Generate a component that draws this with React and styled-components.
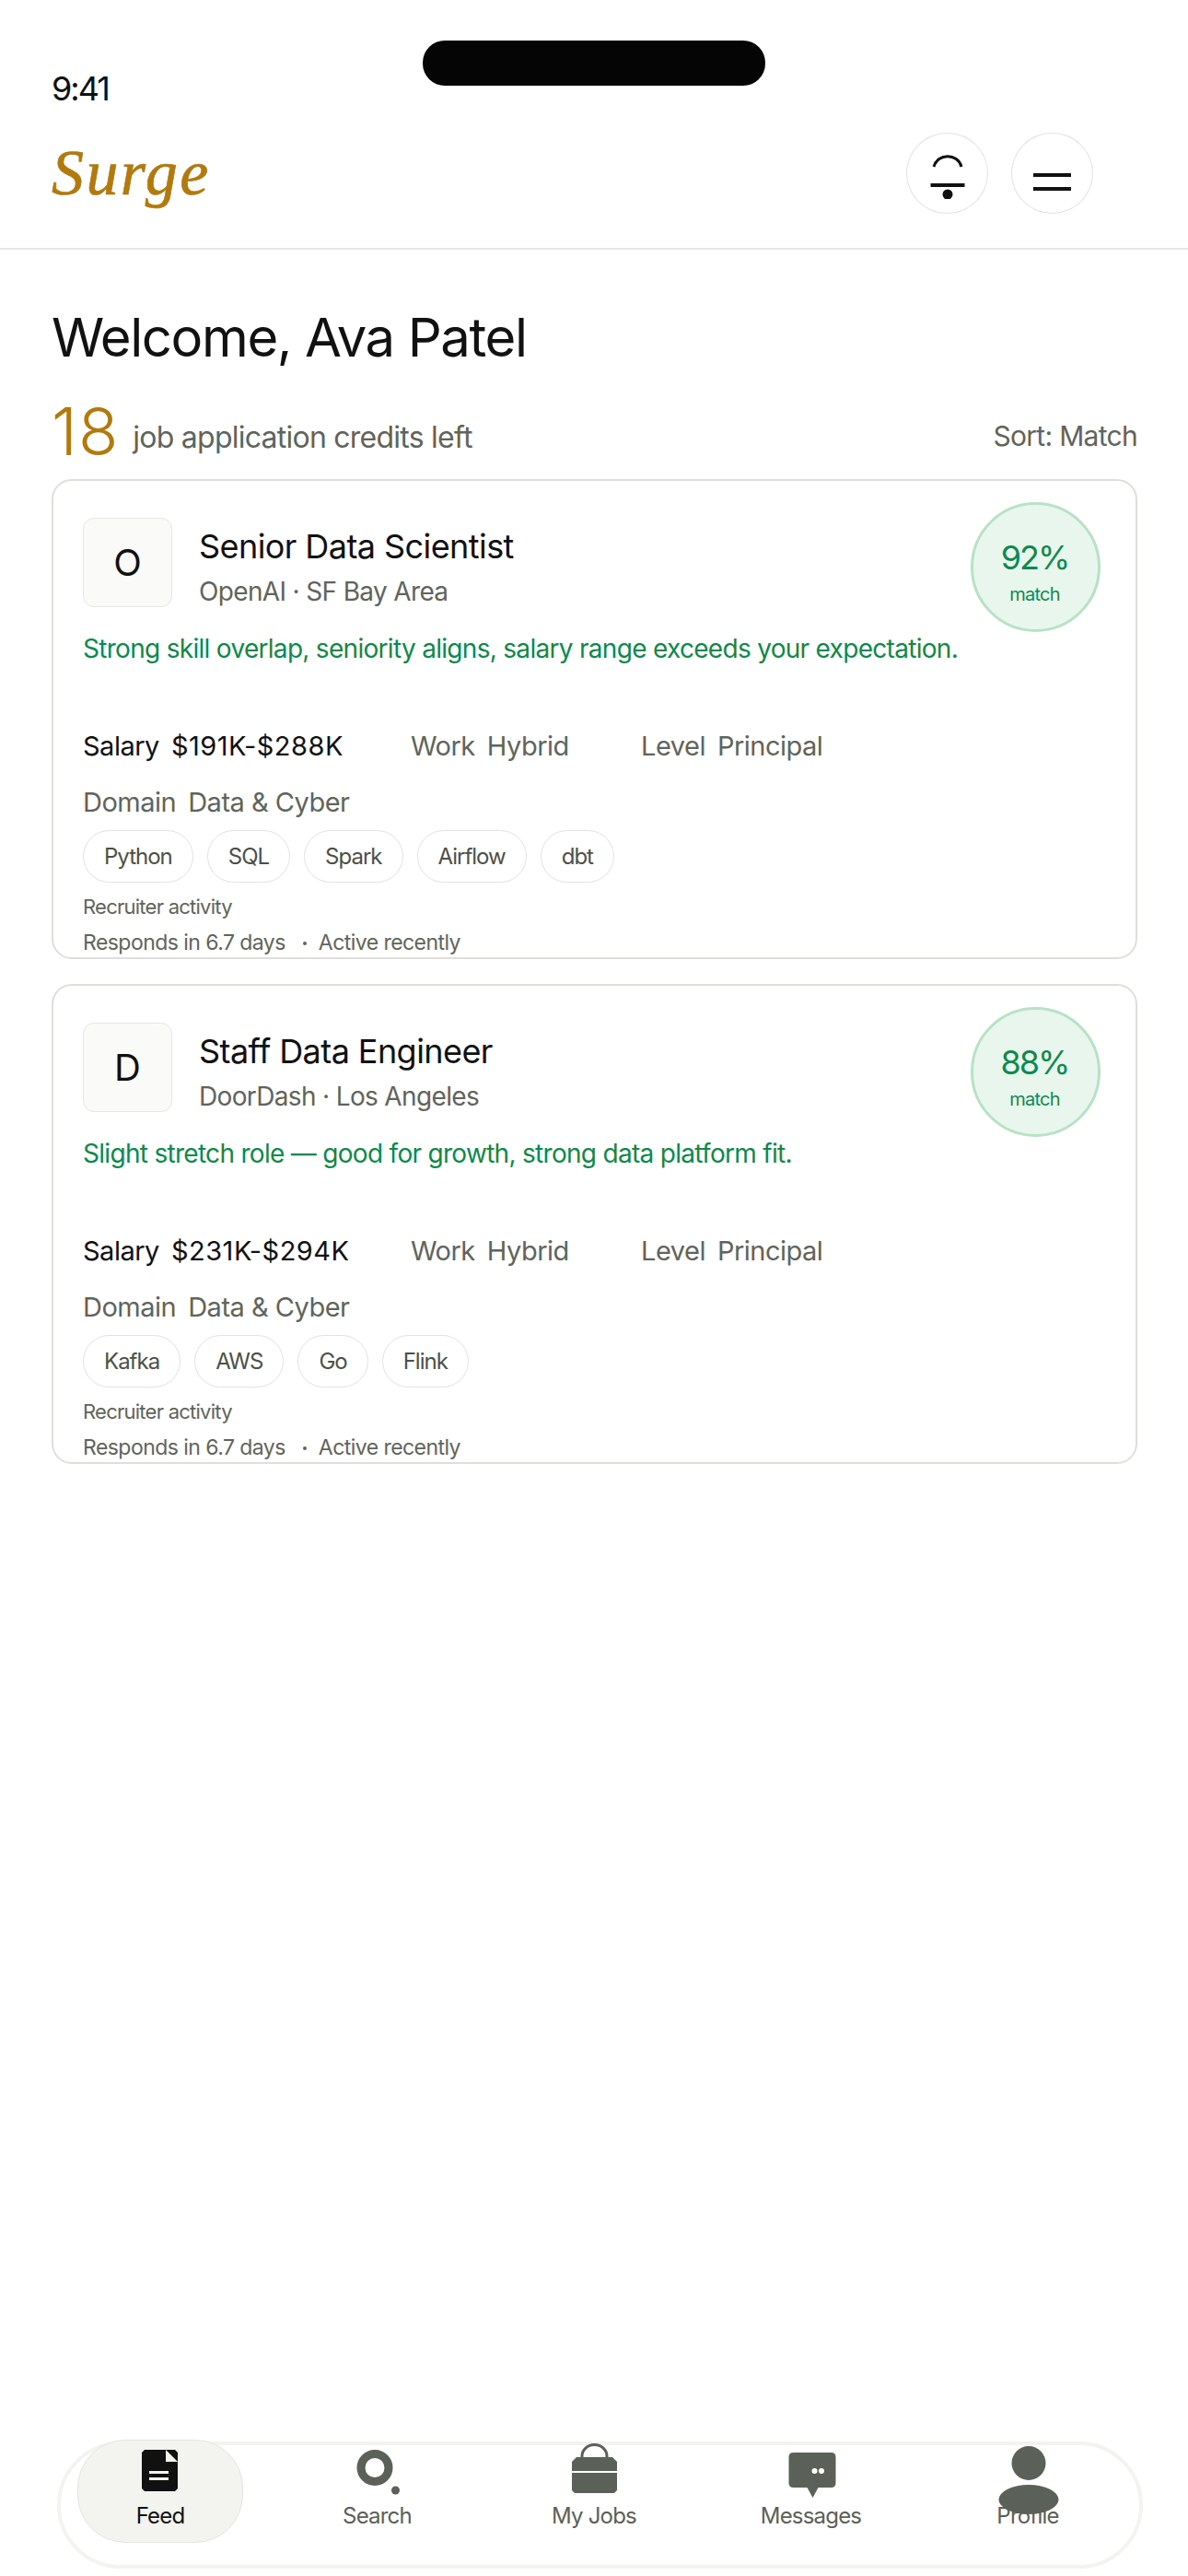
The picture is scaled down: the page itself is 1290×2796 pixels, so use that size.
import styled, { createGlobalStyle } from "styled-components";

const GlobalStyle = createGlobalStyle`
  * { box-sizing: border-box; }
  html, body { margin: 0; padding: 0; background: #fff; }
  body { font-family: Inter, "Liberation Sans", sans-serif; color: #111; }
`;

const Page = styled.div`
  position: relative;
  width: 1290px;
  height: 2796px;
  display: flex;
  flex-direction: column;
  overflow: hidden;
  background: #fff;
`;

const Island = styled.div`
  position: absolute;
  top: 44px;
  left: 459px;
  width: 372px;
  height: 49px;
  border-radius: 24px;
  background: #050505;
`;

const StatusBar = styled.div`
  height: 144px;
  padding: 76px 0 0 56px;
`;

const Time = styled.div`
  font-size: 36px;
  line-height: 40px;
  letter-spacing: -2px;
`;

const Header = styled.header`
  display: flex;
  justify-content: space-between;
  align-items: center;
  padding: 0 103px 37px 56px;
  border-bottom: 2px solid #e6e6e2;
`;

const Logo = styled.div`
  font-family: "Liberation Serif", serif;
  font-style: italic;
  font-size: 70px;
  line-height: 88px;
  letter-spacing: 2.4px;
  -webkit-text-stroke: 0.7px #b27a0d;
  color: #b27a0d;
`;

const Actions = styled.div`
  display: flex;
  gap: 25px;
`;

const RoundButton = styled.button`
  width: 89px;
  height: 88px;
  padding: 0;
  display: flex;
  align-items: center;
  justify-content: center;
  border: 1px solid #e2e2de;
  border-radius: 50%;
  background: #fff;
`;

const Main = styled.main`
  padding: 59px 55px 0 56px;
`;

const Welcome = styled.h1`
  margin: 0 0 32px;
  font-size: 58px;
  line-height: 72px;
  font-weight: 400;
  letter-spacing: -1.4px;
`;

const CreditsRow = styled.div`
  display: flex;
  align-items: center;
  justify-content: space-between;
  margin-bottom: 18px;
`;

const Credits = styled.div`
  display: flex;
  align-items: center;
  gap: 15px;
`;

const CreditCount = styled.span`
  font-size: 71px;
  line-height: 68px;
  font-weight: 350;
  letter-spacing: 1px;
  color: #b27a0d;
`;

const CreditText = styled.span`
  padding-top: 13px;
  font-size: 32px;
  letter-spacing: -0.76px;
  color: #5f645d;
`;

const SortLabel = styled.span`
  padding-top: 9px;
  font-size: 30px;
  letter-spacing: -0.7px;
  color: #5f645d;
`;

const Cards = styled.div`
  display: flex;
  flex-direction: column;
  gap: 27px;
`;

const Card = styled.article`
  position: relative;
  height: 521px;
  padding: 40px 32px 0;
  overflow: hidden;
  border: 2px solid #dfdfda;
  border-radius: 22px;
`;

const CardHead = styled.div`
  display: flex;
  gap: 29px;
`;

const LogoBox = styled.div`
  width: 97px;
  height: 97px;
  display: flex;
  align-items: center;
  justify-content: center;
  flex: none;
  font-size: 40px;
  border: 1px solid #e6e6e2;
  border-radius: 12px;
  background: #fafaf8;
`;

const HeadText = styled.div`
  padding-top: 9px;
`;

const JobTitle = styled.div`
  font-size: 36px;
  line-height: 44px;
  letter-spacing: -0.57px;
  margin-bottom: 9px;
`;

const Company = styled.div`
  font-size: 28px;
  line-height: 36px;
  letter-spacing: -0.65px;
  color: #5f645d;
`;

const MatchBadge = styled.div`
  position: absolute;
  top: 23px;
  right: 38px;
  width: 141px;
  height: 141px;
  padding: 11px 2px 0 0;
  display: flex;
  flex-direction: column;
  align-items: center;
  justify-content: center;
  gap: 4px;
  border: 3px solid #b8e2c8;
  border-radius: 50%;
  background: #e8f6ed;
  color: #0e8a50;
`;

const MatchValue = styled.div`
  font-size: 36px;
  line-height: 44px;
  letter-spacing: -2px;
`;

const MatchLabel = styled.div`
  font-size: 20px;
  line-height: 28px;
  letter-spacing: -0.8px;
`;

const Reason = styled.div`
  margin-top: 26px;
  font-size: 28px;
  line-height: 36px;
  letter-spacing: -0.7px;
  color: #0b8a4c;
`;

const Facts = styled.div`
  display: grid;
  grid-template-columns: 356px 250px 1fr;
  row-gap: 25px;
  margin-top: 70px;
`;

const Fact = styled.div`
  display: flex;
  gap: 13px;
  font-size: 29px;
  line-height: 36px;
  letter-spacing: -0.5px;
  color: ${(props) => (props.$strong ? "#111" : "#5f645d")};
`;

const SalaryValue = styled.span`
  letter-spacing: 0.5px;
`;

const Chips = styled.div`
  display: flex;
  gap: 15px;
  margin-top: 12px;
`;

const Chip = styled.div`
  height: 57px;
  padding: 0 22px;
  display: flex;
  align-items: center;
  font-size: 24px;
  letter-spacing: -1px;
  color: #4c504a;
  border: 1px solid #e2e2de;
  border-radius: 29px;
`;

const ActivityTitle = styled.div`
  margin-top: 12px;
  font-size: 22px;
  line-height: 28px;
  letter-spacing: -0.75px;
  color: #5f645d;
`;

const ActivityLine = styled.div`
  display: flex;
  align-items: center;
  margin-top: 11px;
  font-size: 23px;
  line-height: 28px;
  letter-spacing: -0.55px;
  color: #5f645d;
`;

const ActivityDot = styled.span`
  width: 4px;
  height: 4px;
  margin: 2px 13px 0 19px;
  border-radius: 50%;
  background: #5f645d;
`;

const Nav = styled.nav`
  display: flex;
  justify-content: space-between;
  align-items: flex-start;
  height: 138px;
  margin: auto 49px 8px 62px;
  padding-left: 18px;
  padding-right: 31px;
  border: 4px solid #f3f4f0;
  border-radius: 69px;
`;

const NavItem = styled.div`
  position: relative;
  width: 180px;
  height: 112px;
  margin-top: -6px;
  display: flex;
  flex-direction: column;
  align-items: center;
  border: 1px solid ${(props) => (props.$active ? "#e4e5e0" : "transparent")};
  border-radius: 52px;
  background: ${(props) => (props.$active ? "#f3f4f0" : "transparent")};
  color: ${(props) => (props.$active ? "#111" : "#5b6058")};
`;

const NavIcon = styled.svg`
  position: absolute;
  top: 0;
  left: 0;
  width: 178px;
  height: 110px;
  overflow: visible;
`;

const NavLabel = styled.div`
  margin-top: 66px;
  font-size: 24px;
  line-height: 32px;
  letter-spacing: -0.8px;
`;

const AlertIcon = () => (
  <svg width="46" height="56" viewBox="0 0 46 56" fill="none">
    <path d="M8 21 C12 6 34 6 38 21" stroke="#111" strokeWidth="3" />
    <rect x="4.5" y="39" width="37" height="4" fill="#111" />
    <circle cx="23" cy="51" r="5.5" fill="#111" />
  </svg>
);

const MenuIcon = () => (
  <svg width="41" height="38" viewBox="0 0 41 38" fill="none">
    <rect y="19" width="41" height="4" fill="#111" />
    <rect y="34" width="41" height="4" fill="#111" />
  </svg>
);

const FeedGlyph = () => (
  <>
    <path d="M72 10 h33 l3 3 v39 l-3 3 h-33 l-3 -3 v-39 z" fill="currentColor" />
    <path d="M95 10 v13 h13 z" fill="#f3f4f0" />
    <rect x="77" y="33" width="21" height="3" fill="#f3f4f0" />
    <rect x="77" y="40" width="21" height="3" fill="#f3f4f0" />
  </>
);

const SearchGlyph = () => (
  <>
    <circle cx="86" cy="29.5" r="15" fill="none" stroke="currentColor" strokeWidth="9" />
    <circle cx="108.5" cy="54" r="4.5" fill="currentColor" />
  </>
);

const BagGlyph = () => (
  <>
    <path d="M76 19 V17 a13.5 12.5 0 0 1 27 0 V19" fill="none" stroke="currentColor" strokeWidth="3" />
    <path d="M70 18 h39 l5 5 v10 h-49 v-10 z" fill="currentColor" />
    <path d="M65 35 h49 v19 l-3 3 h-43 l-3 -3 z" fill="currentColor" />
  </>
);

const MessageGlyph = () => (
  <>
    <path d="M69.5 13 h41 q5 0 5 5 v28 q0 5 -5 5 h-14 l-6 11 l-6 -11 h-15 q-5 0 -5 -5 v-28 q0 -5 5 -5 z" fill="currentColor" />
    <circle cx="92.5" cy="33" r="3" fill="#fff" />
    <circle cx="100" cy="33" r="3" fill="#fff" />
  </>
);

const ProfileGlyph = () => (
  <>
    <circle cx="90" cy="24.5" r="18.5" fill="currentColor" />
    <ellipse cx="90" cy="64" rx="32.5" ry="16" fill="currentColor" />
  </>
);

const navItems = [
  { label: "Feed", glyph: <FeedGlyph />, active: true },
  { label: "Search", glyph: <SearchGlyph /> },
  { label: "My Jobs", glyph: <BagGlyph /> },
  { label: "Messages", glyph: <MessageGlyph /> },
  { label: "Profile", glyph: <ProfileGlyph /> },
];

const jobs = [
  {
    initial: "O",
    title: "Senior Data Scientist",
    company: "OpenAI · SF Bay Area",
    match: "92%",
    reason: "Strong skill overlap, seniority aligns, salary range exceeds your expectation.",
    salary: "$191K-$288K",
    skills: ["Python", "SQL", "Spark", "Airflow", "dbt"],
  },
  {
    initial: "D",
    title: "Staff Data Engineer",
    company: "DoorDash · Los Angeles",
    match: "88%",
    reason: "Slight stretch role — good for growth, strong data platform fit.",
    salary: "$231K-$294K",
    skills: ["Kafka", "AWS", "Go", "Flink"],
  },
];

export default function App() {
  return (
    <Page>
      <GlobalStyle />
      <Island />
      <StatusBar>
        <Time>9:41</Time>
      </StatusBar>
      <Header>
        <Logo>Surge</Logo>
        <Actions>
          <RoundButton>
            <AlertIcon />
          </RoundButton>
          <RoundButton>
            <MenuIcon />
          </RoundButton>
        </Actions>
      </Header>
      <Main>
        <Welcome>Welcome, Ava Patel</Welcome>
        <CreditsRow>
          <Credits>
            <CreditCount>18</CreditCount>
            <CreditText>job application credits left</CreditText>
          </Credits>
          <SortLabel>Sort: Match</SortLabel>
        </CreditsRow>
        <Cards>
          {jobs.map((job) => (
            <Card key={job.title}>
              <MatchBadge>
                <MatchValue>{job.match}</MatchValue>
                <MatchLabel>match</MatchLabel>
              </MatchBadge>
              <CardHead>
                <LogoBox>{job.initial}</LogoBox>
                <HeadText>
                  <JobTitle>{job.title}</JobTitle>
                  <Company>{job.company}</Company>
                </HeadText>
              </CardHead>
              <Reason>{job.reason}</Reason>
              <Facts>
                <Fact $strong>
                  <span>Salary</span>
                  <SalaryValue>{job.salary}</SalaryValue>
                </Fact>
                <Fact>
                  <span>Work</span>
                  <span>Hybrid</span>
                </Fact>
                <Fact>
                  <span>Level</span>
                  <span>Principal</span>
                </Fact>
                <Fact>
                  <span>Domain</span>
                  <span>Data &amp; Cyber</span>
                </Fact>
              </Facts>
              <Chips>
                {job.skills.map((skill) => (
                  <Chip key={skill}>{skill}</Chip>
                ))}
              </Chips>
              <ActivityTitle>Recruiter activity</ActivityTitle>
              <ActivityLine>
                <span>Responds in 6.7 days</span>
                <ActivityDot />
                <span>Active recently</span>
              </ActivityLine>
            </Card>
          ))}
        </Cards>
      </Main>
      <Nav>
        {navItems.map((item) => (
          <NavItem key={item.label} $active={item.active}>
            <NavLabel>{item.label}</NavLabel>
            <NavIcon viewBox="0 0 178 110">{item.glyph}</NavIcon>
          </NavItem>
        ))}
      </Nav>
    </Page>
  );
}
